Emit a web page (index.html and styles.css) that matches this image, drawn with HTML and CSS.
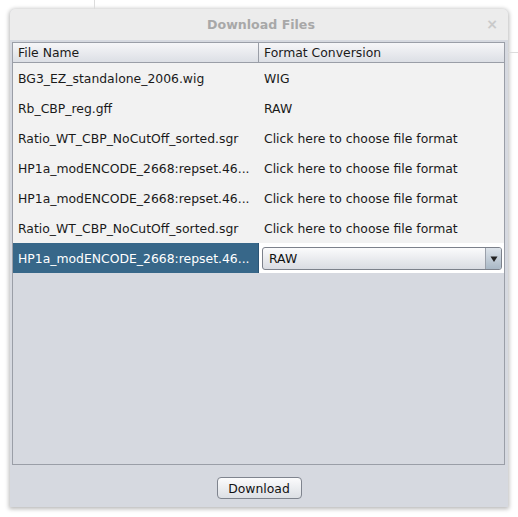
FILE: index.html
```html
<!DOCTYPE html>
<html>
<head>
<meta charset="utf-8">
<link rel="stylesheet" href="styles.css">
</head>
<body>
<div class="deco-v"></div>
<div class="deco-h"></div>
<div class="dialog">
  <div class="titlebar">
    <span class="title">Download Files</span>
    <span class="close">×</span>
  </div>
  <div class="content">
    <div class="table">
      <div class="row head">
        <div class="cell c1">File Name</div>
        <div class="cell c2">Format Conversion</div>
      </div>
      <div class="row"><div class="cell c1">BG3_EZ_standalone_2006.wig</div><div class="cell c2">WIG</div></div>
      <div class="row"><div class="cell c1">Rb_CBP_reg.gff</div><div class="cell c2">RAW</div></div>
      <div class="row"><div class="cell c1">Ratio_WT_CBP_NoCutOff_sorted.sgr</div><div class="cell c2">Click here to choose file format</div></div>
      <div class="row"><div class="cell c1">HP1a_modENCODE_2668:repset.46...</div><div class="cell c2">Click here to choose file format</div></div>
      <div class="row"><div class="cell c1">HP1a_modENCODE_2668:repset.46...</div><div class="cell c2">Click here to choose file format</div></div>
      <div class="row"><div class="cell c1">Ratio_WT_CBP_NoCutOff_sorted.sgr</div><div class="cell c2">Click here to choose file format</div></div>
      <div class="row sel">
        <div class="cell c1">HP1a_modENCODE_2668:repset.46...</div>
        <div class="cell c2 editor">
          <div class="combo">
            <span class="combo-text">RAW</span>
            <span class="combo-btn"><svg width="8" height="8" viewBox="0 0 8 8"><path d="M0.5 1.5 H7.5 L4 7 Z" fill="#222"/></svg></span>
          </div>
        </div>
      </div>
    </div>
  </div>
  <div class="footer">
    <button class="btn">Download</button>
  </div>
</div>
</body>
</html>
```

FILE: styles.css
```css
html, body {
  margin: 0;
  padding: 0;
  background: #ffffff;
  width: 518px;
  height: 517px;
  overflow: hidden;
  font-family: "DejaVu Sans", sans-serif;
  font-size: 12.4px;
  color: #1a1a1a;
}
body { position: relative; }
.deco-v {
  position: absolute;
  left: 94px;
  top: 0;
  width: 1px;
  height: 9px;
  background: #dcdcdc;
}
.deco-h {
  position: absolute;
  left: 508px;
  top: 52px;
  width: 10px;
  height: 1px;
  background: #dcdcdc;
}
.dialog {
  margin: 9px 0 0 10px;
  width: 498px;
  height: 498px;
  border-radius: 5px 5px 0 0;
  background: #d6d9e0;
  box-shadow: 0 1px 4px 1px rgba(0,0,0,0.28);
  display: flex;
  flex-direction: column;
  overflow: hidden;
}
.titlebar {
  height: 31px;
  flex: none;
  background: #ececec;
  display: flex;
  align-items: center;
  justify-content: center;
  position: relative;
}
.title {
  font-weight: bold;
  font-size: 12.6px;
  color: #a8a8a8;
  padding-left: 4px;
}
.close {
  position: absolute;
  right: 10px;
  top: 7px;
  font-size: 14px;
  color: #cacaca;
  font-weight: bold;
}
.content {
  padding: 2px 3px 0 2px;
  flex: none;
}
.table {
  height: 421px;
  border: 1px solid #9a9ea7;
  background: #d6d9e0;
}
.row {
  display: flex;
  height: 30px;
  background: #f2f2f2;
}
.cell {
  display: flex;
  align-items: center;
  white-space: nowrap;
  overflow: hidden;
  padding-top: 1px;
  box-sizing: border-box;
}
.c1 { width: 245px; padding-left: 5px; }
.c2 { flex: 1; padding-left: 6px; }
.row.head {
  height: 19px;
  border-bottom: 1px solid #9a9ea7;
  background: linear-gradient(#f6f6f8, #dcdfe5);
}
.row.head .cell { padding-top: 0; }
.row.head .c1 {
  border-right: 1px solid #9a9ea7;
  width: 246px;
}
.row.head .c2 { padding-left: 5px; }
.row.sel .c1 {
  background: #376789;
  color: #ffffff;
}
.row.sel .editor {
  background: #ffffff;
  padding: 0 2px 0 3px;
  border-left: 1px solid #2c5575;
}
.combo {
  flex: 1;
  height: 23px;
  margin-top: 1px;
  border: 1px solid #7c818b;
  border-radius: 3px;
  background: linear-gradient(#fbfbfc, #d9dce2);
  display: flex;
  align-items: center;
  box-sizing: border-box;
  overflow: hidden;
}
.combo-text {
  flex: 1;
  padding-left: 6px;
  color: #111;
}
.combo-btn {
  width: 15px;
  height: 100%;
  border-left: 1px solid #9aa0aa;
  background: linear-gradient(#dde3ea, #a9b8c6);
  display: flex;
  align-items: center;
  justify-content: center;
}
.footer {
  flex: 1;
  display: flex;
  justify-content: center;
  align-items: flex-start;
  padding-top: 12px;
}
.btn {
  width: 85px;
  height: 22px;
  border: 1px solid #7f848e;
  border-radius: 4px;
  background: linear-gradient(#fbfbfc, #dcdfe4);
  font-family: "DejaVu Sans", sans-serif;
  font-size: 12.4px;
  color: #111;
  padding: 0;
}
```
